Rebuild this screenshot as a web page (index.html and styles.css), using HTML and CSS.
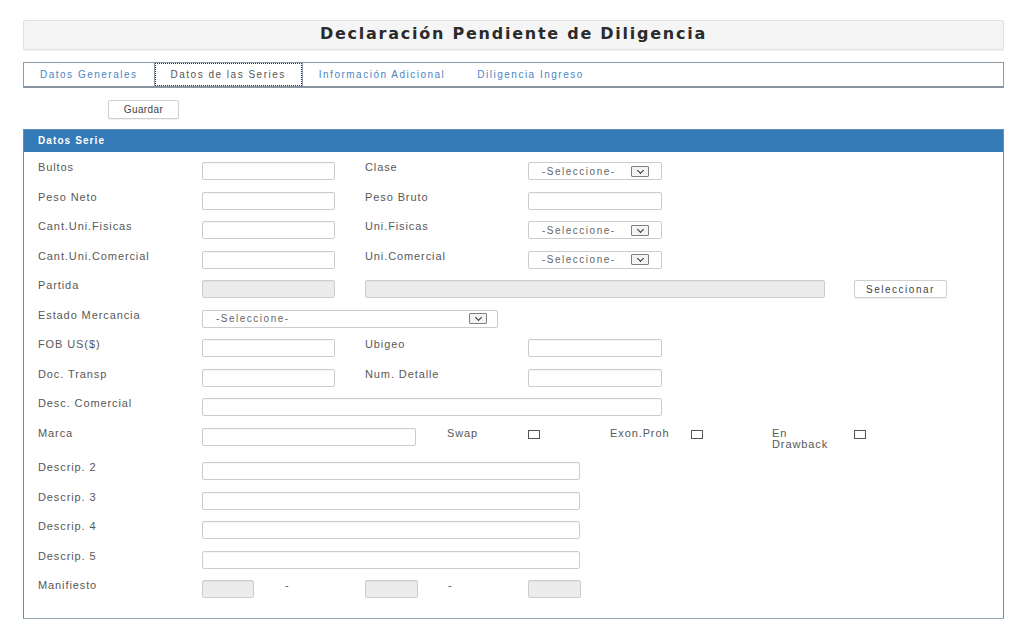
FILE: index.html
```html
<!DOCTYPE html>
<html lang="es">
<head>
<meta charset="utf-8">
<title>Declaración Pendiente de Diligencia</title>
<link rel="stylesheet" href="styles.css">
</head>
<body>
<div class="page">
  <div class="title-bar"><h1 class="title">Declaración Pendiente de Diligencia</h1></div>

  <ul class="tabs">
    <li class="tab">Datos Generales</li>
    <li class="tab active"><span class="focus">Datos de las Series</span></li>
    <li class="tab">Información Adicional</li>
    <li class="tab">Diligencia Ingreso</li>
  </ul>

  <div class="toolbar"><button class="btn btn-save" type="button">Guardar</button></div>

  <section class="panel">
    <div class="panel-heading">Datos Serie</div>
    <div class="panel-body">
      <div class="row">
        <label class="lbl c1">Bultos</label>
        <input class="inp w133 c2" type="text">
        <label class="lbl c4">Clase</label>
        <div class="sel w134 c6"><span>-Seleccione-</span><i class="arrow"></i></div>
      </div>
      <div class="row">
        <label class="lbl c1">Peso Neto</label>
        <input class="inp w133 c2" type="text">
        <label class="lbl c4">Peso Bruto</label>
        <input class="inp w134 c6" type="text">
      </div>
      <div class="row">
        <label class="lbl c1">Cant.Uni.Fisicas</label>
        <input class="inp w133 c2" type="text">
        <label class="lbl c4">Uni.Fisicas</label>
        <div class="sel w134 c6"><span>-Seleccione-</span><i class="arrow"></i></div>
      </div>
      <div class="row">
        <label class="lbl c1">Cant.Uni.Comercial</label>
        <input class="inp w133 c2" type="text">
        <label class="lbl c4">Uni.Comercial</label>
        <div class="sel w134 c6"><span>-Seleccione-</span><i class="arrow"></i></div>
      </div>
      <div class="row">
        <label class="lbl c1">Partida</label>
        <input class="inp w133 c2 dis" type="text" disabled>
        <input class="inp w460 c4 dis" type="text" disabled>
        <button class="btn btn-sel c10" type="button">Seleccionar</button>
      </div>
      <div class="row">
        <label class="lbl c1">Estado Mercancia</label>
        <div class="sel sel-wide w296 c2"><span>-Seleccione-</span><i class="arrow"></i></div>
      </div>
      <div class="row">
        <label class="lbl c1">FOB US($)</label>
        <input class="inp w133 c2" type="text">
        <label class="lbl c4">Ubigeo</label>
        <input class="inp w134 c6" type="text">
      </div>
      <div class="row">
        <label class="lbl c1">Doc. Transp</label>
        <input class="inp w133 c2" type="text">
        <label class="lbl c4">Num. Detalle</label>
        <input class="inp w134 c6" type="text">
      </div>
      <div class="row">
        <label class="lbl c1">Desc. Comercial</label>
        <input class="inp w460 c2" type="text">
      </div>
      <div class="row">
        <label class="lbl c1">Marca</label>
        <input class="inp w214 c2" type="text">
        <label class="lbl c5">Swap</label>
        <input class="cb c6" type="checkbox">
        <label class="lbl c7">Exon.Proh</label>
        <input class="cb c8" type="checkbox">
        <label class="lbl lbl-narrow c9">En Drawback</label>
        <input class="cb c10" type="checkbox">
      </div>
      <div class="row">
        <label class="lbl c1">Descrip. 2</label>
        <input class="inp w378 c2" type="text">
      </div>
      <div class="row">
        <label class="lbl c1">Descrip. 3</label>
        <input class="inp w378 c2" type="text">
      </div>
      <div class="row">
        <label class="lbl c1">Descrip. 4</label>
        <input class="inp w378 c2" type="text">
      </div>
      <div class="row">
        <label class="lbl c1">Descrip. 5</label>
        <input class="inp w378 c2" type="text">
      </div>
      <div class="row">
        <label class="lbl c1">Manifiesto</label>
        <input class="inp w52 c2 dis" type="text" disabled>
        <span class="dash c3">-</span>
        <input class="inp w53 c4 dis" type="text" disabled>
        <span class="dash c5">-</span>
        <input class="inp w53 c6 dis" type="text" disabled>
      </div>
    </div>
  </section>
</div>
</body>
</html>
```

FILE: styles.css
```css
html, body {
  margin: 0;
  padding: 0;
  background: #ffffff;
}

body {
  font-family: "Liberation Sans", Arial, sans-serif;
  color: #555555;
}

.page {
  margin-left: 23px;
  width: 981px;
  padding-top: 20px;
}

/* Title */
.title-bar {
  height: 28px;
  background: #f5f5f5;
  border: 1px solid #e1e1e1;
  border-radius: 2px;
  box-shadow: 0 1px 1px rgba(0, 0, 0, 0.05);
  display: flex;
  align-items: center;
  justify-content: center;
}

.title {
  margin: 0;
  font-family: "DejaVu Sans", "Liberation Sans", sans-serif;
  font-size: 16px;
  font-weight: bold;
  letter-spacing: 1.75px;
  color: #2b2b2b;
  padding-bottom: 3px;
}

/* Tabs */
.tabs {
  list-style: none;
  margin: 12px 0 0 0;
  padding: 0;
  height: 23px;
  border: 1px solid #8e9ba7;
  border-bottom: 2px solid #8895a1;
  display: flex;
  background: #ffffff;
}

.tab {
  padding: 0 16px;
  font-size: 10px;
  letter-spacing: 1.5px;
  line-height: 23px;
  color: #4a86c3;
  white-space: nowrap;
}

.tab.active {
  padding: 0;
  border-left: 1px solid #8e9ba7;
  border-right: 1px solid #8e9ba7;
  color: #555555;
}

.tab.active .focus {
  display: block;
  padding: 0 15px;
  line-height: 21px;
  border: 1px dotted #333333;
}

/* Toolbar */
.toolbar {
  margin-top: 11px;
  padding-left: 85px;
  height: 19px;
}

.btn {
  font-family: "Liberation Sans", Arial, sans-serif;
  background: #ffffff;
  border: 1px solid #cfcfcf;
  border-radius: 2px;
  color: #444444;
  box-shadow: 0 1px 1px rgba(0, 0, 0, 0.06);
  padding: 0;
  cursor: pointer;
}

.btn-save {
  width: 71px;
  height: 19px;
  font-size: 10px;
  letter-spacing: 0.4px;
}

.btn-sel {
  width: 93px;
  height: 18px;
  font-size: 10px;
  letter-spacing: 1.5px;
}

/* Panel */
.panel {
  margin-top: 11px;
  width: 979px;
  border: 1px solid #5d8fc1;
  border-bottom-color: #8fa9b8;
}

.panel-heading {
  height: 22px;
  background: #337ab7;
  color: #ffffff;
  font-size: 10px;
  font-weight: bold;
  letter-spacing: 1.1px;
  line-height: 22px;
  padding-left: 14px;
}

.panel-body {
  padding: 10px 14px 8px 14px;
}

.row {
  display: grid;
  grid-template-columns: 164px 82px 81px 82px 81px 82px 81px 81px 82px 1fr;
  align-items: start;
  min-height: 18px;
  margin-bottom: 11.5px;
}

.c1 { grid-column: 1; }
.c2 { grid-column: 2 / span 4; }
.c3 { grid-column: 3; }
.c4 { grid-column: 4 / span 2; }
.c5 { grid-column: 5; }
.c6 { grid-column: 6 / span 2; }
.c7 { grid-column: 7; }
.c8 { grid-column: 8; }
.c9 { grid-column: 9; }
.c10 { grid-column: 10; }

.row > * {
  grid-row: 1;
}

.lbl {
  font-size: 11px;
  line-height: 11.5px;
  letter-spacing: 0.9px;
  color: #585858;
  white-space: nowrap;
}

.lbl-narrow {
  white-space: normal;
  width: 60px;
}

.inp {
  box-sizing: border-box;
  height: 18px;
  margin: 0;
  padding: 0 4px;
  border: 1px solid #cccccc;
  border-radius: 2px;
  background: #ffffff;
  box-shadow: inset 0 1px 1px rgba(0, 0, 0, 0.04);
  font-family: "Liberation Sans", Arial, sans-serif;
  font-size: 10px;
}

.inp.dis {
  background: #ececec;
  border-color: #cdcdcd;
}

.w52 { width: 52px; }
.w53 { width: 53px; }
.w133 { width: 133px; }
.w134 { width: 134px; }
.w214 { width: 214px; }
.w296 { width: 296px; }
.w378 { width: 378px; }
.w460 { width: 460px; }

.sel {
  box-sizing: border-box;
  height: 18px;
  border: 1px solid #cccccc;
  border-radius: 2px;
  background: #ffffff;
  display: flex;
  align-items: center;
  justify-content: space-between;
  padding: 0 12px 0 13px;
  font-size: 10px;
  letter-spacing: 1.5px;
  color: #666666;
}

.sel-wide {
  padding-right: 10px;
}

.arrow {
  box-sizing: border-box;
  width: 18px;
  height: 11px;
  border: 1px solid #7f7f7f;
  border-radius: 1px;
  background: #f4f4f4;
  position: relative;
  display: block;
}

.arrow::after {
  content: "";
  position: absolute;
  left: 5.5px;
  top: 1px;
  width: 4px;
  height: 4px;
  border-right: 1.5px solid #333333;
  border-bottom: 1.5px solid #333333;
  transform: rotate(45deg);
}

.cb {
  appearance: none;
  -webkit-appearance: none;
  box-sizing: border-box;
  width: 12px;
  height: 9px;
  margin: 2px 0 0 0;
  border: 1px solid #555555;
  background: #ffffff;
  border-radius: 0;
}

.dash {
  font-size: 11px;
  line-height: 11.5px;
  color: #555555;
  padding-left: 1px;
}
```
